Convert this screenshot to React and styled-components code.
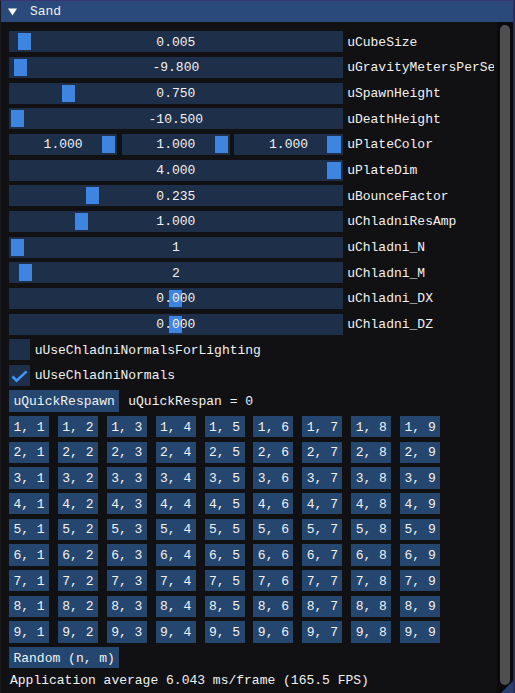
import React from 'react';
import styled, { createGlobalStyle } from 'styled-components';

const FH = 21.2;
const SPY = 4.47;
const SPX = 8.9;
const INNER = 4.47;
const SLIDER_W = 333.7;

const Global = createGlobalStyle`
  html, body { margin: 0; padding: 0; background: #111113; }
  body {
    font-family: "Liberation Mono", "DejaVu Sans Mono", monospace;
    font-size: 13px;
    color: #f2f2f2;
  }
`;

const Window = styled.div`
  position: relative;
  width: 515px;
  height: 693px;
  box-sizing: border-box;
  background: #111113;
  border-top: 1px solid #3a3572;
  border-right: 2px solid #2f2b5e;
  border-left: 1px solid #1a1a1f;
  display: flex;
  flex-direction: column;
  overflow: hidden;
`;

const TitleBar = styled.div`
  height: 21px;
  flex: none;
  background: #294a7a;
  display: flex;
  align-items: center;
  padding-left: 7.3px;
  gap: 12.6px;
  line-height: 21px;
`;

const Body = styled.div`
  flex: 1;
  min-height: 0;
  display: flex;
`;

const Content = styled.div`
  flex: 1;
  min-width: 0;
  overflow: hidden;
  margin-right: 3px;
  padding: 9.3px 0 0 8px;
  display: flex;
  flex-direction: column;
  gap: ${SPY}px;
`;

const ScrollTrack = styled.div`
  width: 16px;
  flex: none;
  background: #0b0b0d;
  box-sizing: border-box;
  padding: 3px 3px 8px 3px;
  display: flex;
`;

const ScrollThumb = styled.div`
  flex: 1;
  border-radius: 5px;
  background: #4f4f4f;
`;

const ResizeGrip = styled.div`
  position: absolute;
  right: 0;
  bottom: 0;
  width: 12px;
  height: 12px;
  background: #2a416f;
  clip-path: polygon(100% 0, 100% 100%, 0 100%);
`;

const Row = styled.div`
  flex: none;
  height: ${FH}px;
  display: flex;
  align-items: center;
  gap: ${(p) => (p.$wide ? SPX : INNER)}px;
  white-space: nowrap;
`;

const SliderFrame = styled.div`
  position: relative;
  flex: ${(p) => (p.$grow ? '1' : 'none')};
  width: ${(p) => (p.$grow ? 'auto' : `${SLIDER_W}px`)};
  height: 100%;
  background: #1d2f49;
  display: flex;
  align-items: center;
  justify-content: center;
`;

const Grab = styled.div`
  position: absolute;
  top: 2px;
  bottom: 2px;
  width: 13.4px;
  background: #3d85e0;
`;

const FrameText = styled.span`
  position: relative;
  line-height: ${FH}px;
  padding-top: 1px;
`;

const MultiGroup = styled.div`
  width: ${SLIDER_W}px;
  flex: none;
  height: 100%;
  display: flex;
  gap: ${INNER}px;
`;

const Label = styled.span`
  line-height: ${FH}px;
  padding-top: 1px;
`;

const CheckBox = styled.div`
  width: ${FH}px;
  height: ${FH}px;
  flex: none;
  background: #1d2f49;
  display: flex;
  align-items: center;
  justify-content: center;
`;

const Button = styled.div`
  flex: none;
  height: ${FH}px;
  box-sizing: border-box;
  padding: ${(p) => (p.$cell ? '1px 0 0 0' : '1px 4.47px 0')};
  background: #24466f;
  display: flex;
  align-items: center;
  justify-content: center;
  white-space: nowrap;
  line-height: ${FH}px;
`;

const Grid = styled.div`
  flex: none;
  display: grid;
  grid-template-columns: repeat(9, 40px);
  column-gap: ${SPX}px;
  row-gap: ${SPY}px;
  grid-auto-rows: ${FH}px;
`;

const Status = styled.div`
  flex: none;
  line-height: 15px;
  white-space: nowrap;
  padding-left: 1px;
`;

const sliders = [
  { value: '0.005', grab: 8.7, label: 'uCubeSize' },
  { value: '-9.800', grab: 5, label: 'uGravityMetersPerSecond' },
  { value: '0.750', grab: 53, label: 'uSpawnHeight' },
  { value: '-10.500', grab: 2, label: 'uDeathHeight' },
  { multi: ['1.000', '1.000', '1.000'], label: 'uPlateColor' },
  { value: '4.000', grab: SLIDER_W - 15.4, label: 'uPlateDim' },
  { value: '0.235', grab: 77, label: 'uBounceFactor' },
  { value: '1.000', grab: 66, label: 'uChladniResAmp' },
  { value: '1', grab: 2, label: 'uChladni_N' },
  { value: '2', grab: 10, label: 'uChladni_M' },
  { value: '0.000', grab: 160, label: 'uChladni_DX' },
  { value: '0.000', grab: 160, label: 'uChladni_DZ' },
];

const Triangle = () => (
  <svg width="9" height="8" viewBox="0 0 9 8">
    <polygon points="0,0.5 9,0.5 4.5,7.5" fill="#ffffff" />
  </svg>
);

const Check = () => (
  <svg width="21" height="21" viewBox="0 0 21 21">
    <polyline
      points="3.5,11.5 7.6,15.6 17.6,6.4"
      fill="none"
      stroke="#4296fa"
      strokeWidth="2.6"
      strokeLinejoin="miter"
    />
  </svg>
);

function SliderRow({ s }) {
  return (
    <Row>
      {s.multi ? (
        <MultiGroup>
          {s.multi.map((v, i) => (
            <SliderFrame key={i} $grow>
              <Grab style={{ right: 2 }} />
              <FrameText>{v}</FrameText>
            </SliderFrame>
          ))}
        </MultiGroup>
      ) : (
        <SliderFrame>
          <Grab style={{ left: s.grab }} />
          <FrameText>{s.value}</FrameText>
        </SliderFrame>
      )}
      <Label>{s.label}</Label>
    </Row>
  );
}

export default function App() {
  const cells = [];
  for (let n = 1; n <= 9; n++) {
    for (let m = 1; m <= 9; m++) {
      cells.push(`${n}, ${m}`);
    }
  }
  return (
    <>
      <Global />
      <Window>
        <TitleBar>
          <Triangle />
          <span>Sand</span>
        </TitleBar>
        <Body>
          <Content>
            {sliders.map((s, i) => (
              <SliderRow key={i} s={s} />
            ))}
            <Row>
              <CheckBox />
              <Label>uUseChladniNormalsForLighting</Label>
            </Row>
            <Row>
              <CheckBox>
                <Check />
              </CheckBox>
              <Label>uUseChladniNormals</Label>
            </Row>
            <Row $wide>
              <Button>uQuickRespawn</Button>
              <Label>uQuickRespan = 0</Label>
            </Row>
            <Grid>
              {cells.map((c) => (
                <Button key={c} $cell>
                  {c}
                </Button>
              ))}
            </Grid>
            <Row>
              <Button>Random (n, m)</Button>
            </Row>
            <Status>Application average 6.043 ms/frame (165.5 FPS)</Status>
          </Content>
          <ScrollTrack>
            <ScrollThumb />
          </ScrollTrack>
        </Body>
        <ResizeGrip />
      </Window>
    </>
  );
}
